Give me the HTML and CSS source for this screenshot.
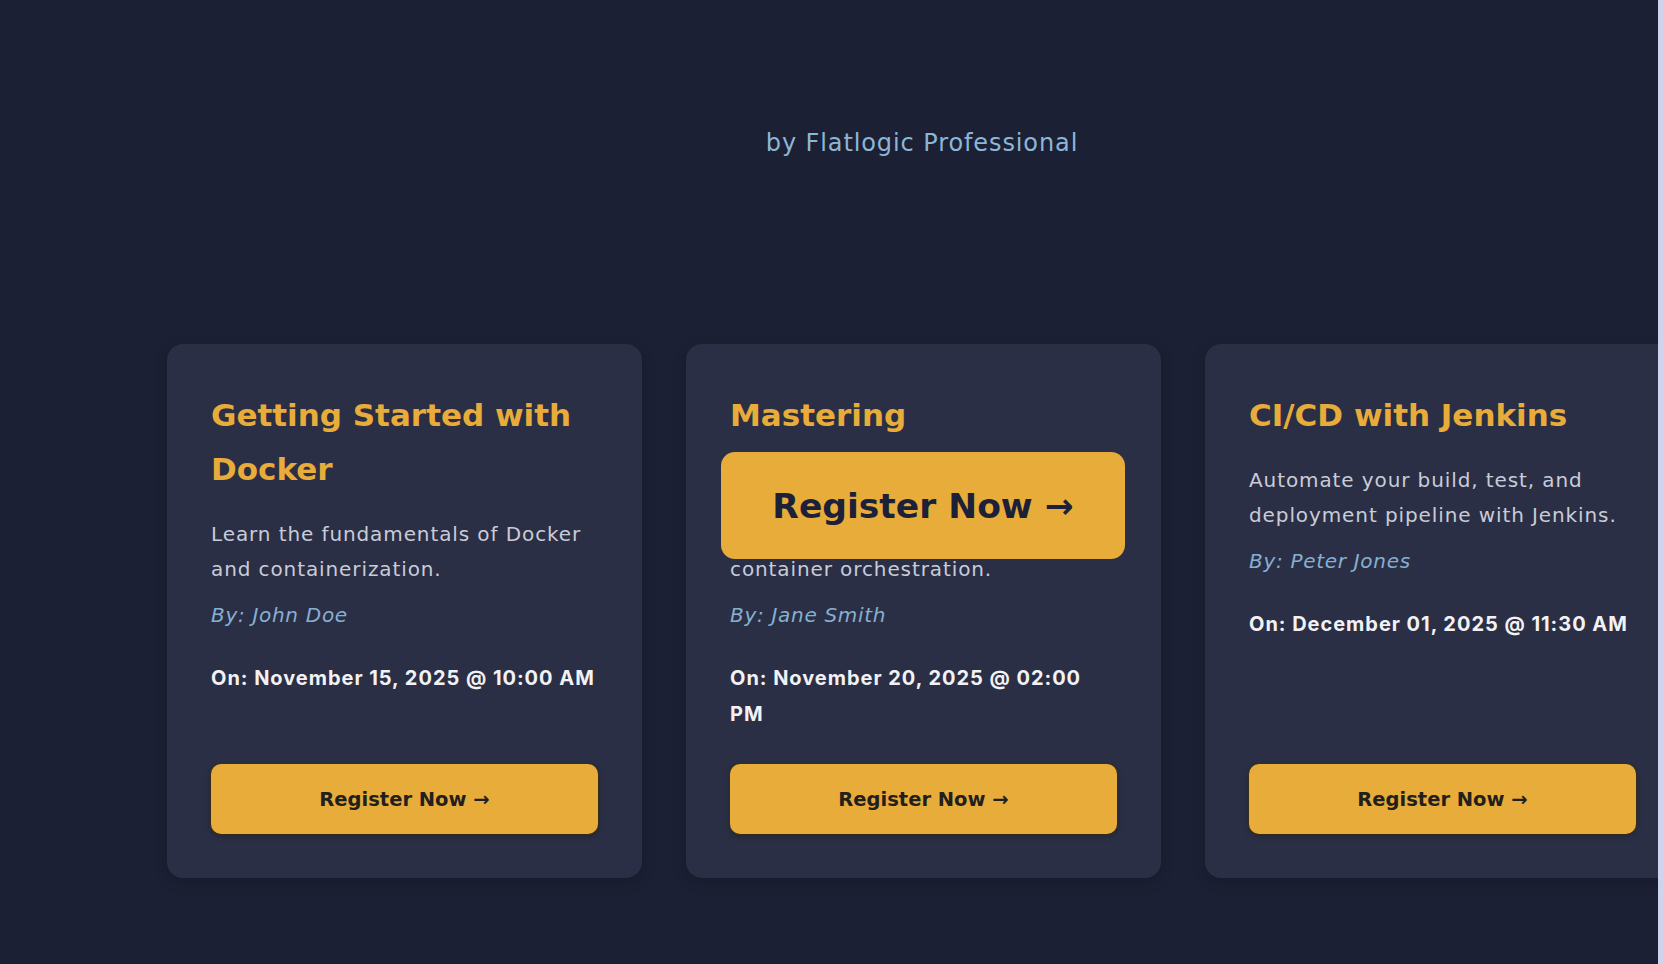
FILE: index.html
```html
<!DOCTYPE html>
<html lang="en">
<head>
<meta charset="utf-8">
<title>Webinars</title>
<link rel="stylesheet" href="styles.css">
</head>
<body>
<div class="page">
  <div class="inner">
    <p class="subtitle">by Flatlogic Professional</p>
    <div class="cards">
      <article class="card">
        <h3 class="card-title">Getting Started with Docker</h3>
        <p class="card-desc">Learn the fundamentals of Docker and containerization.</p>
        <p class="card-by">By: John Doe</p>
        <p class="card-date">On: November 15, 2025 @ 10:00 AM</p>
        <button class="btn">Register Now →</button>
      </article>
      <article class="card card-hover">
        <h3 class="card-title">Mastering Kubernetes</h3>
        <p class="card-desc">Deep dive into Kubernetes for container orchestration.</p>
        <p class="card-by">By: Jane Smith</p>
        <p class="card-date">On: November 20, 2025 @ 02:00 PM</p>
        <button class="btn">Register Now →</button>
        <div class="btn-zoom">Register Now →</div>
      </article>
      <article class="card">
        <h3 class="card-title">CI/CD with Jenkins</h3>
        <p class="card-desc">Automate your build, test, and deployment pipeline with Jenkins.</p>
        <p class="card-by">By: Peter Jones</p>
        <p class="card-date">On: December 01, 2025 @ 11:30 AM</p>
        <button class="btn">Register Now →</button>
      </article>
    </div>
  </div>
</div>
<div class="edge"></div>
</body>
</html>
```
FILE: styles.css
```css
html, body {
  margin: 0;
  padding: 0;
  height: 964px;
  overflow: hidden;
}
body {
  display: flex;
  background: #1c2034;
  font-family: "DejaVu Sans", "Noto Sans", sans-serif;
}
.page {
  flex: 1;
  overflow: hidden;
  background: #1c2034;
}
.inner {
  width: 1844px;
  padding-top: 125px;
}
.subtitle {
  margin: 0;
  text-align: center;
  color: #8db6d6;
  font-size: 24px;
  letter-spacing: 0.9px;
  line-height: 36px;
  font-weight: 400;
}
.cards {
  display: flex;
  gap: 44px;
  padding-left: 167px;
  margin-top: 183px;
  align-items: stretch;
}
.card {
  position: relative;
  width: 475px;
  flex: 0 0 475px;
  box-sizing: border-box;
  padding: 44px;
  background: #2b2f45;
  border-radius: 16px;
  display: flex;
  flex-direction: column;
  box-shadow: 0 4px 14px rgba(0, 0, 0, 0.18);
}
.card-title {
  margin: 0;
  color: #e8ac3b;
  font-size: 31px;
  line-height: 54px;
  font-weight: 700;
}
.card-desc {
  margin: 21px 0 0;
  color: #c9ccd8;
  font-size: 20px;
  letter-spacing: 0.9px;
  line-height: 35px;
}
.card-by {
  margin: 11px 0 0;
  color: #86b0d2;
  font-size: 20px;
  letter-spacing: 0.7px;
  line-height: 35px;
  font-style: italic;
}
.card-date {
  margin: 27px 0 32px;
  color: #f2f2f4;
  font-family: "Inter", "DejaVu Sans", sans-serif;
  font-size: 20px;
  letter-spacing: 0.97px;
  line-height: 36px;
  font-weight: 700;
}
.btn {
  margin-top: auto;
  height: 70px;
  width: 100%;
  border: none;
  border-radius: 10px;
  background: #e8ac3b;
  color: #221f1c;
  font-family: inherit;
  font-size: 19.5px;
  font-weight: 700;
  box-shadow: 0 0 0 1px rgba(60, 45, 15, 0.7), 0 2px 6px rgba(0, 0, 0, 0.25);
}
.btn-zoom {
  position: absolute;
  left: 35px;
  top: 108px;
  width: 404px;
  height: 107px;
  border-radius: 14px;
  background: #e8ac3b;
  color: #1c2138;
  font-size: 34.5px;
  font-weight: 700;
  display: flex;
  align-items: center;
  justify-content: center;
}
.edge {
  width: 6px;
  flex: 0 0 6px;
  background: #cfd4ee;
}
```
